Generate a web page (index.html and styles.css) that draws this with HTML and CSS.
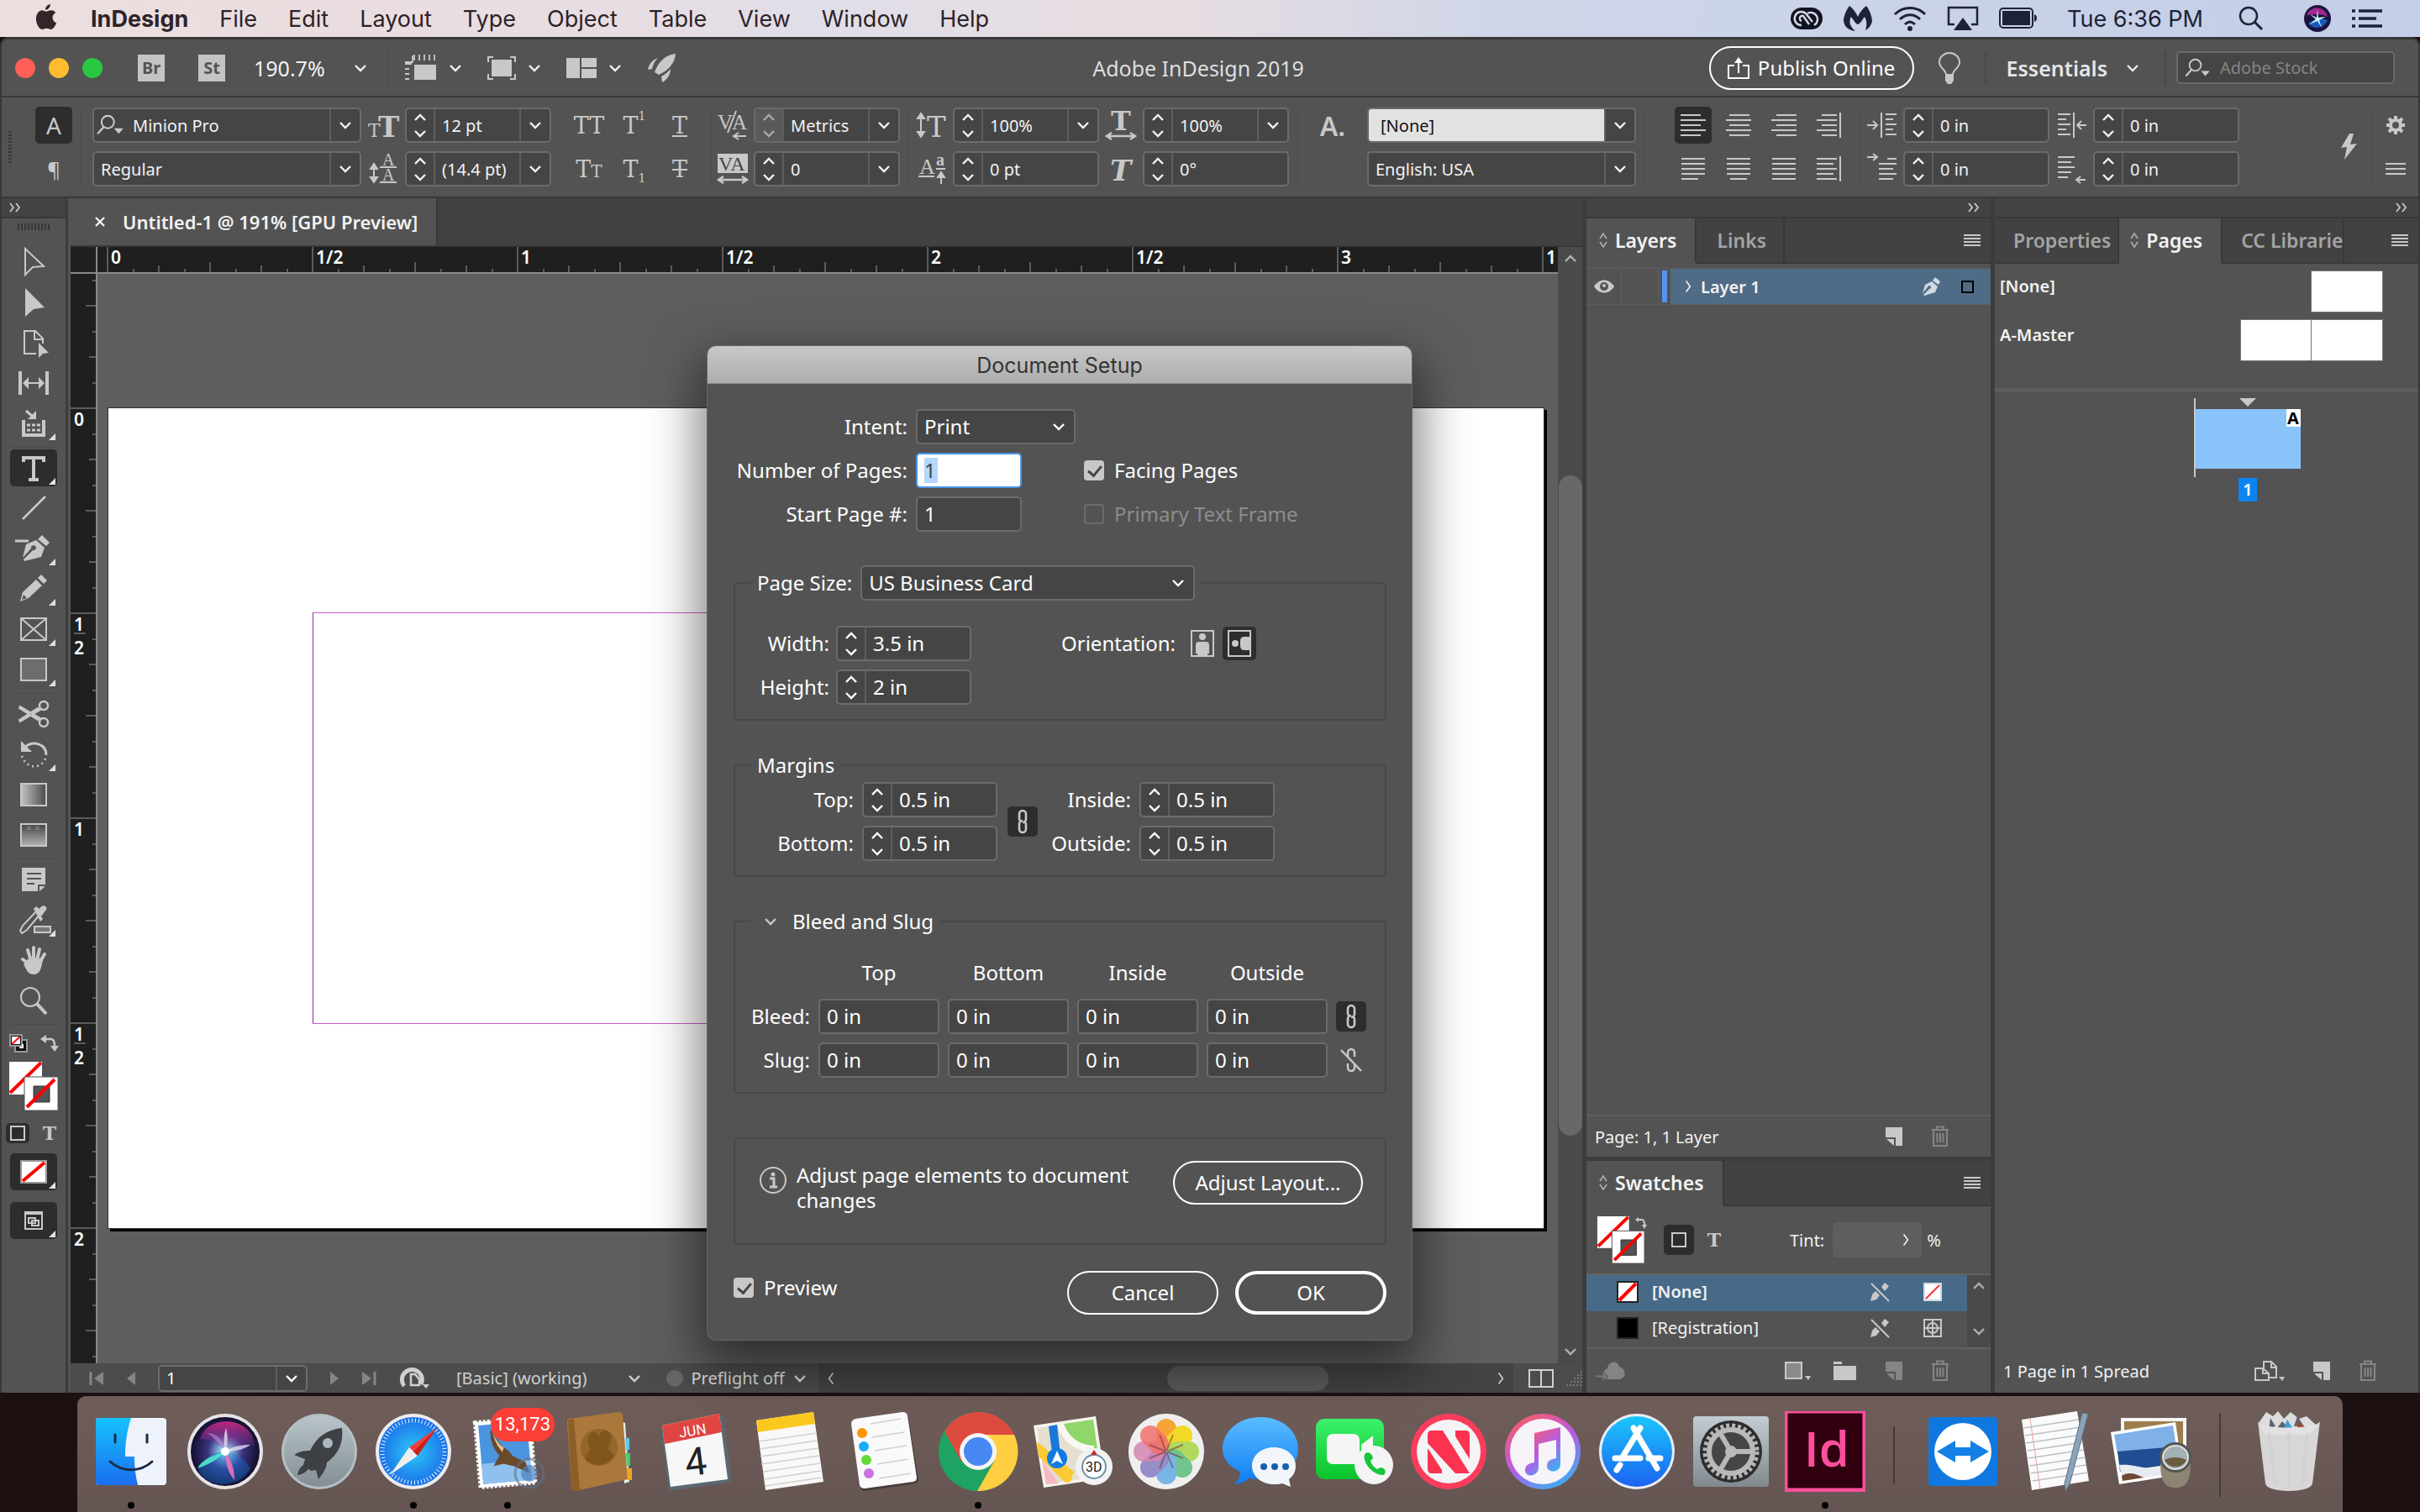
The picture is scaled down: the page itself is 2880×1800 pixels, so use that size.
FILE: index.html
```html
<!DOCTYPE html>
<html lang="en">

<head>
    <meta charset="UTF-8">
    <meta name="viewport" content="width=device-width, initial-scale=1.0">
    <title>Adobe InDesign 2019</title>
    <link rel="stylesheet" href="styles.css">
</head>

<body>
    <!-- shared icons -->
    <svg class="sprite" aria-hidden="true">
        <symbol id="down" viewBox="0 0 16 10"><path d="M2 2l6 6 6-6" fill="none" stroke="currentColor" stroke-width="2.4" /></symbol>
        <symbol id="up" viewBox="0 0 16 10"><path d="M2 8l6-6 6 6" fill="none" stroke="currentColor" stroke-width="2.4" /></symbol>
        <symbol id="right" viewBox="0 0 10 20"><path d="M2 2l6 8-6 8" fill="none" stroke="currentColor" stroke-width="2" /></symbol>
        <symbol id="left" viewBox="0 0 10 20"><path d="M8 2l-6 8 6 8" fill="none" stroke="currentColor" stroke-width="2" /></symbol>
        <symbol id="expand" viewBox="0 0 16 12"><path d="M2 1l4 5-4 5M9 1l4 5-4 5" fill="none" stroke="currentColor" stroke-width="1.8" /></symbol>
        <symbol id="updown" viewBox="0 0 12 20"><path d="M2 8l4-6 4 6M2 12l4 6 4-6" fill="none" stroke="currentColor" stroke-width="1.8" /></symbol>
        <symbol id="menu" viewBox="0 0 20 16"><path d="M0 2h20M0 6h20M0 10h20M0 14h20" stroke="currentColor" stroke-width="2" /></symbol>
        <symbol id="glass" viewBox="0 0 36 28"><circle cx="14" cy="10" r="8" fill="none" stroke="currentColor" stroke-width="2.2" /><path d="M9 16l-8 9" stroke="currentColor" stroke-width="2.6" /><path d="M22 18h12l-6 7z" fill="currentColor" /></symbol>
        <symbol id="page" viewBox="0 0 20 22"><path d="M0 0h20v22H12V12H0z" fill="currentColor" /><path d="M1 14h9v8z" fill="currentColor" /></symbol>
        <symbol id="trash" viewBox="0 0 22 26"><path d="M1 5h20M7 5V1.500h8V5M3 5v19h16V5M7.500 9v11M11 9v11M14.500 9v11" fill="none" stroke="currentColor" stroke-width="2" /></symbol>
        <symbol id="link" viewBox="0 0 16 30"><path d="M5 14a4 4 0 0 1-1-3V6a4 4 0 0 1 8 0v6a4 4 0 0 1-4 4M11 16a4 4 0 0 1 1 3v5a4 4 0 0 1-8 0v-6a4 4 0 0 1 4-4" fill="none" stroke="currentColor" stroke-width="2.6" /></symbol>
        <symbol id="unlink" viewBox="0 0 28 30"><path d="M10 11V6a4 4 0 0 1 8 0v5M18 19v5a4 4 0 0 1-8 0v-5M2 3l24 25" fill="none" stroke="currentColor" stroke-width="2.4" /></symbol>
        <symbol id="noedit" viewBox="0 0 24 24"><path d="M2 2l21 21" stroke="currentColor" stroke-width="2" /><path d="M14 6l4-5 5 4-5 6zM1 23l2-8 4-4 5 5-4 5z" fill="currentColor" /></symbol>
        <symbol id="corner" viewBox="0 0 8 8"><path d="M8 0v8H0z" fill="#e0e0e0" /></symbol>
        <symbol id="fillstroke" viewBox="0 0 60 60">
            <path d="M1 1h39v39H1z" fill="#fff" /><path d="M2 38L39 2" stroke="#f00" stroke-width="4" />
            <path d="M19 19h40v40H19z" fill="#fff" stroke="#535353" /><path d="M30 30h19v19H30z" fill="#535353" stroke="#333" />
            <path d="M22 55l33-33" stroke="#f00" stroke-width="4" />
        </symbol>
    </svg>

    <header class="menubar">
        <svg class="apple" viewBox="0 0 26 32"><path d="M18 0c.400 3-2.500 7-6 7-.500-3 2.500-6.500 6-7zM13 9c1.500 0 3.500-1.800 6.500-1.500 2 .200 3.800 1 5 2.800-5.500 3.500-4.500 10.500 1 12.700-1.500 4-4 8-6.800 8-2 0-2.800-1.200-5.200-1.200S10 31 8.300 31C4.500 31 .500 24 .500 18S4 7.800 8 7.500c2 0 3.500 1.500 5 1.500z" fill="#33262a" /></svg>
        <nav class="menus">
            <a href="#" class="app-name">InDesign</a>
            <a href="#">File</a>
            <a href="#">Edit</a>
            <a href="#">Layout</a>
            <a href="#">Type</a>
            <a href="#">Object</a>
            <a href="#">Table</a>
            <a href="#">View</a>
            <a href="#">Window</a>
            <a href="#">Help</a>
        </nav>
        <div class="tray">
            <svg width="38" height="28" viewBox="0 0 38 28"><path d="M13 1h12a13 13 0 0 1 0 26H13A13 13 0 0 1 13 1z" fill="#111420" /><path d="M13 22a8 8 0 1 1 5-14l8 10M13 17a3 3 0 1 1 2-6l7 10M20 8a8 8 0 1 1 8 14" fill="none" stroke="#d3d9ea" stroke-width="2.400" /></svg>
            <svg width="36" height="32" viewBox="0 0 36 32"><path d="M8 1c4 3 8 8 10 13C20 9 24 4 28 1c5 6 7 15 7 18-1 5-4 9-8 11 2-6 2-11-1-16-3 4-5 8-8 9-3-1-5-5-8-9-3 5-2 11 5 17C6 30 2 25 1 19 1 14 4 6 8 1z" fill="#1d2336" /></svg>
            <svg width="40" height="30" viewBox="0 0 40 30"><g fill="none" stroke="#1d2336" stroke-width="3"><path d="M2 10c10-10 26-10 36 0" /><path d="M8 16c7-7 17-7 24 0" /><path d="M14 22c4-4 8-4 12 0" /></g><circle cx="20" cy="27" r="3" fill="#1d2336" /></svg>
            <svg width="38" height="30" viewBox="0 0 38 30"><path d="M9 22H2V2h34v20h-7" fill="none" stroke="#1d2336" stroke-width="2.500" /><path d="M19 14l11 15H8z" fill="#1d2336" /></svg>
            <svg width="46" height="26" viewBox="0 0 46 26"><rect x="1" y="1" width="39" height="23" rx="4" fill="none" stroke="#1d2336" stroke-width="2" /><rect x="4" y="4" width="33" height="17" fill="#1d2336" /><path d="M42 8c4 1 4 8 0 9z" fill="#1d2336" /></svg>
            <span class="clock">Tue 6:36 PM</span>
            <svg width="30" height="30" viewBox="0 0 30 30"><circle cx="12" cy="12" r="10" fill="none" stroke="#1d2336" stroke-width="2.500" /><path d="M19 19l9 9" stroke="#1d2336" stroke-width="3" /></svg>
            <svg class="tray-siri" width="32" height="32" viewBox="0 0 32 32"><circle cx="16" cy="16" r="16" fill="#1c1440" /><path d="M3 12C8-1 26 2 28 14c-8-4-16-3-25-2z" fill="#a02890" /><path d="M5 22c8-6 15-7 23-4-4 10-16 12-23 4z" fill="#1a5ab8" /><path d="M16 5l1 10 9-1-8 4 3 9-5-8-10 4 8-6-7-6 8 4z" fill="#c6f2fa" /></svg>
            <svg width="38" height="24" viewBox="0 0 38 24"><path d="M9 3h28M9 12h21M9 21h28" stroke="#1d2336" stroke-width="3.500" /><path d="M1 3h4M1 12h4M1 21h4" stroke="#1d2336" stroke-width="3.500" /></svg>
        </div>
    </header>

    <div class="window">
        <!-- application bar -->
        <div class="appbar">
            <div class="lights">
                <button class="light red" aria-label="Close"></button>
                <button class="light yellow" aria-label="Minimize"></button>
                <button class="light green" aria-label="Zoom"></button>
            </div>
            <button class="adobe-box">Br</button>
            <button class="adobe-box">St</button>
            <button class="zoom-level">190.7% <svg class="chev"><use href="#down" /></svg></button>
            <div class="view-buttons">
                <button aria-label="View options"><svg width="38" height="32" viewBox="0 0 38 32"><path d="M11 12h26v18H11z" fill="currentColor" /><path d="M11 0v7M17 0v7M23 0v7M29 0v7M35 0v7M0 11h8M0 17h5M0 23h5M0 29h5M9 1v8H0" stroke="currentColor" stroke-width="1.800" fill="none" /></svg><svg class="chev"><use href="#down" /></svg></button>
                <button aria-label="Screen mode"><svg width="34" height="28" viewBox="0 0 34 28"><path d="M5 4h24v20H5z" fill="currentColor" /><path d="M1 7V1h6M27 1h6v6M33 21v6h-6M7 27H1v-6" stroke="currentColor" stroke-width="2" fill="none" /></svg><svg class="chev"><use href="#down" /></svg></button>
                <button aria-label="Arrange documents"><svg width="36" height="24" viewBox="0 0 36 24"><path d="M0 0h16v24H0zM18 0h18v11H18zM18 13h18v11H18z" fill="currentColor" /></svg><svg class="chev"><use href="#down" /></svg></button>
                <button aria-label="GPU performance"><svg width="36" height="34" viewBox="0 0 36 34"><path d="M34 0C22 1 13 10 9 22l5 3C25 20 33 12 34 0zM13 5C6 7 2 13 1 19l5-1c1-5 3-9 7-13zM28 18c-3 4-7 7-11 9l1 7c6-3 10-9 10-16z" fill="currentColor" /></svg></button>
            </div>
            <h1 class="app-title">Adobe InDesign 2019</h1>
            <div class="app-right">
                <button class="pill publish"><svg width="26" height="26" viewBox="0 0 26 26"><path d="M8 10H1v15h24V10h-7M13 19V3" fill="none" stroke="currentColor" stroke-width="2" /><path d="M13 0l5 7H8z" fill="currentColor" /></svg>Publish Online</button>
                <button class="bulb" aria-label="Learn"><svg width="28" height="38" viewBox="0 0 28 38"><path d="M10 27c0-6-8-8-8-15a12 11 0 0 1 24 0c0 7-8 9-8 15z" fill="none" stroke="currentColor" stroke-width="2" /><path d="M9 27h10v7l-3 4h-4l-3-4z" fill="currentColor" /></svg></button>
                <button class="workspace">Essentials <svg class="chev"><use href="#down" /></svg></button>
                <label class="stock"><svg width="36" height="24"><use href="#glass" /></svg><input type="text" placeholder="Adobe Stock" aria-label="Adobe Stock"></label>
            </div>
        </div>

        <!-- character control panel -->
        <div class="control">
            <span class="grip-v"></span>
            <div class="group">
                <button class="icon-btn on char">A</button>
                <button class="icon-btn">¶</button>
            </div>
            <div class="group g-font">
                <div class="field"><svg class="field-icon" width="36" height="26"><use href="#glass" /></svg><input type="text" value="Minion Pro" aria-label="Font family"><button class="drop" aria-label="Fonts"><svg class="chev"><use href="#down" /></svg></button></div>
                <div class="field pick"><select aria-label="Font style"><option>Regular</option></select><span class="drop"><svg class="chev"><use href="#down" /></svg></span></div>
                <svg class="ico" viewBox="0 0 44 36"><text x="4" y="32" class="slab" font-size="22">T</text><text x="16" y="32" class="slab b" font-size="34">T</text></svg>
                <svg class="ico" viewBox="0 0 44 36"><path d="M11 14v18M7 18l4-6 4 6zM7 28l4 6 4-6zM18 16h20M18 34h20" stroke="currentColor" stroke-width="2" fill="currentColor" /><text x="21" y="14" class="serif" font-size="20">A</text><text x="21" y="32" class="serif" font-size="20">A</text></svg>
                <div class="field"><span class="spin"><button><svg><use href="#up" /></svg></button><button><svg><use href="#down" /></svg></button></span><input type="text" value="12 pt" aria-label="Font size"><button class="drop" aria-label="Sizes"><svg class="chev"><use href="#down" /></svg></button></div>
                <div class="field"><span class="spin"><button><svg><use href="#up" /></svg></button><button><svg><use href="#down" /></svg></button></span><input type="text" value="(14.4 pt)" aria-label="Leading"><button class="drop" aria-label="Leadings"><svg class="chev"><use href="#down" /></svg></button></div>
            </div>
            <div class="group g-case">
                <button class="ty">TT</button>
                <button class="ty">T<small>T</small></button>
                <button class="ty">T<sup>1</sup></button>
                <button class="ty">T<sub>1</sub></button>
                <button class="ty"><u>T</u></button>
                <button class="ty"><s>T</s></button>
            </div>
            <div class="group g-kern">
                <svg class="ico" viewBox="0 0 44 36"><text x="4" y="23" class="serif" font-size="25">V</text><text x="21" y="23" class="serif" font-size="25">A</text><path d="M16 27L26 1M24 31h14M29 27l-6 4 6 4" stroke="currentColor" stroke-width="2" fill="none" /></svg>
                <svg class="ico" viewBox="0 0 44 36"><path d="M4 0h36v23H4z" fill="currentColor" /><text x="5" y="20" class="serif dark" font-size="24">VA</text><path d="M6 31h32M11 27l-6 4 6 4M33 27l6 4-6 4" stroke="currentColor" stroke-width="2.500" fill="none" /></svg>
                <div class="field"><span class="spin dim"><button><svg><use href="#up" /></svg></button><button><svg><use href="#down" /></svg></button></span><input type="text" value="Metrics" aria-label="Kerning"><button class="drop" aria-label="Kerning values"><svg class="chev"><use href="#down" /></svg></button></div>
                <div class="field"><span class="spin"><button><svg><use href="#up" /></svg></button><button><svg><use href="#down" /></svg></button></span><input type="text" value="0" aria-label="Tracking"><button class="drop" aria-label="Tracking values"><svg class="chev"><use href="#down" /></svg></button></div>
            </div>
            <div class="group g-scale">
                <svg class="ico" viewBox="0 0 44 36"><path d="M10 6v24M6 10l4-6 4 6zM6 26l4 6 4-6z" stroke="currentColor" stroke-width="2" fill="currentColor" /><text x="17" y="32" class="slab" font-size="34">T</text></svg>
                <svg class="ico" viewBox="0 0 44 36"><text x="8" y="24" class="serif" font-size="26">A</text><text x="28" y="14" class="serif b" font-size="20">a</text><path d="M7 27h19M28 18h11M34 36V24M30 28l4-6 4 6z" stroke="currentColor" stroke-width="2" fill="currentColor" /></svg>
                <div class="field"><span class="spin"><button><svg><use href="#up" /></svg></button><button><svg><use href="#down" /></svg></button></span><input type="text" value="100%" aria-label="Vertical scale"><button class="drop" aria-label="Vertical scales"><svg class="chev"><use href="#down" /></svg></button></div>
                <div class="field"><span class="spin"><button><svg><use href="#up" /></svg></button><button><svg><use href="#down" /></svg></button></span><input type="text" value="0 pt" aria-label="Baseline shift"></div>
                <svg class="ico" viewBox="0 0 44 36"><text x="10" y="24" class="slab b" font-size="32">T</text><path d="M6 31h32M11 27l-6 4 6 4M33 27l6 4-6 4" stroke="currentColor" stroke-width="2.500" fill="none" /></svg>
                <svg class="ico" viewBox="0 0 44 36"><text x="9" y="32" class="slab b i" font-size="34">T</text></svg>
                <div class="field"><span class="spin"><button><svg><use href="#up" /></svg></button><button><svg><use href="#down" /></svg></button></span><input type="text" value="100%" aria-label="Horizontal scale"><button class="drop" aria-label="Horizontal scales"><svg class="chev"><use href="#down" /></svg></button></div>
                <div class="field"><span class="spin"><button><svg><use href="#up" /></svg></button><button><svg><use href="#down" /></svg></button></span><input type="text" value="0°" aria-label="Skew"></div>
            </div>
            <div class="group g-style">
                <span class="char-style">A.</span>
                <span></span>
                <div class="field pick light-field"><select aria-label="Character style"><option>[None]</option></select><span class="drop"><svg class="chev"><use href="#down" /></svg></span></div>
                <div class="field pick"><select aria-label="Language"><option>English: USA</option></select><span class="drop"><svg class="chev"><use href="#down" /></svg></span></div>
            </div>
            <div class="group g-align">
                <button class="icon-btn on" aria-label="Align left"><svg viewBox="0 0 30 30"><path d="M0 3h24M0 9h30M0 15h24M0 21h30M0 27h24" /></svg></button>
                <button class="icon-btn" aria-label="Justify last left"><svg viewBox="0 0 30 30"><path d="M1 3h28M1 9h28M1 15h28M1 21h28M1 27h20" /></svg></button>
                <button class="icon-btn" aria-label="Align center"><svg viewBox="0 0 30 30"><path d="M4 3h24M0 9h32M4 15h24M0 21h32M4 27h24" /></svg></button>
                <button class="icon-btn" aria-label="Justify last center"><svg viewBox="0 0 30 30"><path d="M1 3h28M1 9h28M1 15h28M1 21h28M5 27h20" /></svg></button>
                <button class="icon-btn" aria-label="Align right"><svg viewBox="0 0 30 30"><path d="M6 3h24M0 9h30M6 15h24M0 21h30M6 27h24" /></svg></button>
                <button class="icon-btn" aria-label="Justify all"><svg viewBox="0 0 30 30"><path d="M1 3h28M1 9h28M1 15h28M1 21h28M1 27h28" /></svg></button>
                <button class="icon-btn" aria-label="Align towards spine"><svg viewBox="0 0 30 30"><path d="M6 3h18M0 9h24M6 15h18M0 21h24M6 27h18M28 0v30" /></svg></button>
                <button class="icon-btn" aria-label="Align away from spine"><svg viewBox="0 0 30 30"><path d="M0 3h24M0 9h20M0 15h24M0 21h20M0 27h24M28 0v30" /></svg></button>
            </div>
            <div class="group g-indent">
                <svg class="ico line" viewBox="0 0 44 36"><path d="M4 18h11M11 13l5 5-5 5M21 3v30M26 5h13M26 11h9M26 17h13M26 23h9M26 29h13" /></svg>
                <svg class="ico line" viewBox="0 0 44 36"><path d="M4 4h11M11 0l5 4-5 4M28 6h11M18 12h21M18 18h17M18 24h21M18 30h17" /></svg>
                <div class="field"><span class="spin"><button><svg><use href="#up" /></svg></button><button><svg><use href="#down" /></svg></button></span><input type="text" value="0 in" aria-label="Left indent"></div>
                <div class="field"><span class="spin"><button><svg><use href="#up" /></svg></button><button><svg><use href="#down" /></svg></button></span><input type="text" value="0 in" aria-label="First line indent"></div>
                <svg class="ico line" viewBox="0 0 44 36"><path d="M6 5h15M6 11h10M6 17h15M6 23h10M6 29h15M25 3v30M29 18h11M34 13l-5 5 5 5" /></svg>
                <svg class="ico line" viewBox="0 0 44 36"><path d="M6 4h20M6 10h16M6 16h20M6 22h16M6 28h12M28 31h11M33 27l-5 4 5 4" /></svg>
                <div class="field"><span class="spin"><button><svg><use href="#up" /></svg></button><button><svg><use href="#down" /></svg></button></span><input type="text" value="0 in" aria-label="Right indent"></div>
                <div class="field"><span class="spin"><button><svg><use href="#up" /></svg></button><button><svg><use href="#down" /></svg></button></span><input type="text" value="0 in" aria-label="Last line indent"></div>
            </div>
            <div class="control-end">
                <button aria-label="Quick apply"><svg width="22" height="32" viewBox="0 0 22 32"><path d="M12 0L2 17l7-1-3 15L21 12l-8 1 4-13z" fill="currentColor" /></svg></button>
                <div class="group g-end">
                    <button aria-label="Settings"><svg width="22" height="22" viewBox="0 0 22 22"><circle cx="11" cy="11" r="6" fill="none" stroke="currentColor" stroke-width="4" /><path d="M11 0v4M11 18v4M0 11h4M18 11h4M3 3l3 3M16 16l3 3M3 19l3-3M16 6l3-3" stroke="currentColor" stroke-width="4" /></svg></button>
                    <button aria-label="Panel menu"><svg width="24" height="16" viewBox="0 0 24 16"><path d="M0 2h24M0 8h24M0 14h24" stroke="currentColor" stroke-width="2" /></svg></button>
                </div>
            </div>
        </div>

        <div class="workarea">
            <!-- tools -->
            <aside class="tools">
                <div class="dock-strip left"><svg width="16" height="12"><use href="#expand" /></svg></div>
                <span class="grip-h"></span>
                <div class="tool-set">
                    <button aria-label="Selection"><svg viewBox="0 0 48 40"><path d="M14 4v31l9-9 13-1z" fill="none" stroke="currentColor" stroke-width="2" /></svg></button>
                    <button aria-label="Direct selection"><svg viewBox="0 0 48 40"><path d="M14 3v34l10-9 13-2z" fill="currentColor" /></svg></button>
                    <button aria-label="Page"><svg viewBox="0 0 48 40"><path d="M27 33H13V6h13l9 9v6M25 6v10h10" fill="none" stroke="currentColor" stroke-width="2" /><path d="M30 20v18l5-5 7-1z" fill="currentColor" /></svg></button>
                    <button aria-label="Gap"><svg viewBox="0 0 48 40"><path d="M8 6v28M40 6v28" stroke="currentColor" stroke-width="4" /><path d="M14 20h20" stroke="currentColor" stroke-width="2" /><path d="M11 20l7-7v14zM37 20l-7-7v14z" fill="currentColor" /></svg></button>
                    <button aria-label="Content collector"><svg viewBox="0 0 48 40"><path d="M12 16v18h24V16" fill="none" stroke="currentColor" stroke-width="4" /><path d="M16 22h16M16 28h16" stroke="currentColor" stroke-width="3" stroke-dasharray="4 2" /><path d="M15 5l8 7" stroke="currentColor" stroke-width="3" /><path d="M27 5v10H17z" fill="currentColor" /></svg><svg class="more"><use href="#corner" /></svg></button>
                </div>
                <div class="tool-set">
                    <button class="on" aria-label="Type"><svg viewBox="0 0 48 40"><path d="M12 13V8h24v5M24 8v26M18 34h12" fill="none" stroke="currentColor" stroke-width="4" /></svg><svg class="more"><use href="#corner" /></svg></button>
                    <button aria-label="Line"><svg viewBox="0 0 48 40"><path d="M11 33L38 6" stroke="currentColor" stroke-width="2.500" /></svg></button>
                    <button aria-label="Pen"><svg viewBox="0 0 48 40"><path d="M2 11h16" stroke="currentColor" stroke-width="3" /><path d="M34 4l9 9-4 4-10-8zM27 10l10 9-4 11-20 5-1-2 11-11a3 3 0 1 0-2-2L11 31l4-16z" fill="currentColor" /></svg><svg class="more"><use href="#corner" /></svg></button>
                    <button aria-label="Pencil"><svg viewBox="0 0 48 40"><path d="M33 3l7 7-4 4-7-7zM27 9l7 7-16 15-10 4 3-11zM12 27l-2 6 6-2z" fill="currentColor" fill-rule="evenodd" /></svg><svg class="more"><use href="#corner" /></svg></button>
                    <button aria-label="Rectangle frame"><svg viewBox="0 0 48 40"><path d="M9 7h30v26H9zM9 7l30 26M39 7L9 33" fill="none" stroke="currentColor" stroke-width="2" /></svg><svg class="more"><use href="#corner" /></svg></button>
                    <button aria-label="Rectangle"><svg viewBox="0 0 48 40"><path d="M9 7h30v26H9z" fill="#6d6d6d" stroke="currentColor" stroke-width="2" /></svg><svg class="more"><use href="#corner" /></svg></button>
                </div>
                <div class="tool-set">
                    <button aria-label="Scissors"><svg viewBox="0 0 48 40"><path d="M8 11l24 14-3 2L7 13zM8 29l24-14-3-2L7 27z" fill="currentColor" stroke="currentColor" stroke-width="2" /><g fill="none" stroke="currentColor" stroke-width="2.500"><circle cx="36" cy="10" r="5" /><circle cx="36" cy="30" r="5" /></g></svg></button>
                    <button aria-label="Rotate"><svg viewBox="0 0 48 40"><path d="M13 12c10-9 26-5 26 9" fill="none" stroke="currentColor" stroke-width="3" /><path d="M9 4v13h13z" fill="currentColor" /><path d="M38 25c-4 12-22 14-28-3" fill="none" stroke="currentColor" stroke-width="2.500" stroke-dasharray="2 4" /></svg><svg class="more"><use href="#corner" /></svg></button>
                    <button aria-label="Gradient swatch"><svg viewBox="0 0 48 40"><linearGradient id="gs"><stop stop-color="#c4c4c4" /><stop offset="1" stop-color="#4a4a4a" /></linearGradient><path d="M9 7h30v26H9z" fill="url(#gs)" stroke="currentColor" stroke-width="2" /></svg></button>
                    <button aria-label="Gradient feather"><svg viewBox="0 0 48 40"><linearGradient id="gf" x2="0" y2="1"><stop stop-color="#444" /><stop offset="1" stop-color="#b4b4b4" /></linearGradient><path d="M9 7h30v26H9z" fill="url(#gf)" stroke="currentColor" stroke-width="2" /><path d="M16 9h5v5h-5zM26 9h5v5h-5z" fill="#8a8a8a" opacity=".5" /></svg></button>
                </div>
                <div class="tool-set">
                    <button aria-label="Note"><svg viewBox="0 0 48 40"><path d="M10 6h28v20h-9v8H10z" fill="currentColor" /><path d="M31 28h7l-7 6z" fill="currentColor" /><path d="M16 13h17M16 19h17M16 25h9" stroke="#535353" stroke-width="2" /></svg></button>
                    <button aria-label="Color theme"><svg viewBox="0 0 48 40"><path d="M28 9l4 4-16 19-6 4-2-3 3-6z" fill="none" stroke="currentColor" stroke-width="2" /><path d="M24 7l3-3 4 3c4-7 10-3 8 1l-6 8 2 3-3 3z" fill="currentColor" /><path d="M25 28h19v7H25z" fill="#777" stroke="currentColor" stroke-width="2" /></svg><svg class="more"><use href="#corner" /></svg></button>
                    <button aria-label="Hand"><svg viewBox="0 0 48 40"><g stroke="currentColor" stroke-width="4" stroke-linecap="round"><path d="M11 19l9 7M17 8l4 13M24 5v15M31 7l-3 13M37 13l-6 10" /></g><path d="M18 18h13l4 2c-2 9-3 17-11 17-7 0-8-5-12-12z" fill="currentColor" /></svg></button>
                    <button aria-label="Zoom"><svg viewBox="0 0 48 40"><circle cx="20" cy="16" r="11" fill="none" stroke="currentColor" stroke-width="2" /><path d="M28 24l11 12" stroke="currentColor" stroke-width="4" /></svg></button>
                </div>
                <div class="swatch-tools">
                    <button aria-label="Default fill and stroke"><svg width="24" height="24" viewBox="0 0 24 24"><path d="M8 8h14v14H8z" fill="#111" stroke="#999" stroke-width="2" /><path d="M2 2h14v13H2z" fill="#111" stroke="#999" stroke-width="2" /><path d="M4 4h10v9H4z" fill="#fff" /><path d="M4 13L14 4" stroke="#f00" stroke-width="2" /><path d="M13 17h4v-4" stroke="#fff" stroke-width="2" fill="none" /></svg></button>
                    <button aria-label="Swap"><svg width="22" height="20" viewBox="0 0 22 20"><path d="M5 5h8q4 0 4 9" fill="none" stroke="currentColor" stroke-width="2.500" /><path d="M0 5l7-5v10zM12 13h10l-5 7z" fill="currentColor" /></svg></button>
                </div>
                <button class="fill-big" aria-label="Fill and stroke"><svg width="60" height="60"><use href="#fillstroke" /></svg></button>
                <div class="format-row">
                    <button class="on" aria-label="Formatting affects container"><svg width="18" height="18" viewBox="0 0 18 18"><path d="M1 1h16v16H1z" fill="none" stroke="currentColor" stroke-width="2" /></svg></button>
                    <button class="slab-t">T</button>
                </div>
                <button class="big-tool" aria-label="Apply none"><svg width="32" height="28" viewBox="0 0 32 28"><path d="M1 1h30v26H1z" fill="#fff" stroke="#999" stroke-width="2" /><path d="M3 25L29 3" stroke="#f00" stroke-width="4" /></svg><svg class="more"><use href="#corner" /></svg></button>
                <button class="big-tool" aria-label="Screen mode"><svg width="22" height="22" viewBox="0 0 22 22"><path d="M1 1h20v20H1zM0 3h22" fill="none" stroke="currentColor" stroke-width="2" /><path d="M5 8h8v6H5zM9 11h8v6H9z" fill="none" stroke="currentColor" stroke-width="2" /></svg><svg class="more"><use href="#corner" /></svg></button>
            </aside>

            <!-- document -->
            <main class="document">
                <div class="doc-tabs">
                    <div class="doc-tab"><button aria-label="Close tab"><svg width="14" height="14" viewBox="0 0 14 14"><path d="M2 2l10 10M12 2L2 12" stroke="currentColor" stroke-width="2.400" /></svg></button><span>Untitled-1 @ 191% [GPU Preview]</span></div>
                </div>
                <div class="doc-body">
                    <div class="ruler-corner"></div>
                    <svg class="ruler-x" id="rulerX"></svg>
                    <svg class="ruler-y" id="rulerY"></svg>
                    <div class="canvas">
                        <div class="sheet">
                            <div class="margins"></div>
                        </div>
                    </div>
                    <div class="scroll-y">
                        <button aria-label="Scroll up"><svg class="chev"><use href="#up" /></svg></button>
                        <span class="thumb"></span>
                        <button aria-label="Scroll down"><svg class="chev"><use href="#down" /></svg></button>
                    </div>
                </div>
                <div class="status">
                    <div class="pager">
                        <button class="dim" aria-label="First page"><svg width="18" height="16" viewBox="0 0 18 16"><path d="M2 0v16" stroke="currentColor" stroke-width="3" /><path d="M17 0v16L6 8z" fill="currentColor" /></svg></button>
                        <button class="dim" aria-label="Previous page"><svg width="10" height="16" viewBox="0 0 10 16"><path d="M10 0v16L0 8z" fill="currentColor" /></svg></button>
                        <div class="field page-field"><input type="text" value="1" aria-label="Page"><button class="drop" aria-label="Pages"><svg class="chev"><use href="#down" /></svg></button></div>
                        <button class="dim" aria-label="Next page"><svg width="10" height="16" viewBox="0 0 10 16"><path d="M0 0v16l10-8z" fill="currentColor" /></svg></button>
                        <button class="dim" aria-label="Last page"><svg width="18" height="16" viewBox="0 0 18 16"><path d="M16 0v16" stroke="currentColor" stroke-width="3" /><path d="M1 0v16l11-8z" fill="currentColor" /></svg></button>
                        <button aria-label="Open preflight"><svg width="36" height="26" viewBox="0 0 36 26"><path d="M6 22A12 12 0 1 1 26 20" fill="none" stroke="currentColor" stroke-width="5" /><path d="M14 8h5l5 6v7H14z" fill="none" stroke="currentColor" stroke-width="2.500" /><path d="M28 20h8l-4 5z" fill="currentColor" /></svg></button>
                    </div>
                    <button class="profile">[Basic] (working) <svg class="chev"><use href="#down" /></svg></button>
                    <button class="preflight"><i></i>Preflight off <svg class="chev"><use href="#down" /></svg></button>
                    <div class="scroll-x">
                        <button aria-label="Scroll left"><svg width="10" height="16"><use href="#left" /></svg></button>
                        <span class="thumb"></span>
                        <button aria-label="Scroll right"><svg width="10" height="16"><use href="#right" /></svg></button>
                    </div>
                    <button class="split" aria-label="Split view"><svg width="30" height="22" viewBox="0 0 30 22"><path d="M1 1h28v20H1zM15 1v20" fill="none" stroke="currentColor" stroke-width="2" /></svg></button>
                    <svg width="20" height="20" viewBox="0 0 20 20"><path d="M1 18h19M6 14h14M10 10h10M14 6h6M18 2h2" stroke="#777" stroke-width="2" stroke-dasharray="2 2" /></svg>
                </div>
            </main>

            <!-- layers and swatches -->
            <aside class="panel-col mid">
                <div class="dock-strip"><svg width="16" height="12"><use href="#expand" /></svg></div>
                <section class="panel layers">
                    <div class="tabs">
                        <button class="tab on"><svg width="12" height="20"><use href="#updown" /></svg>Layers</button>
                        <button class="tab">Links</button>
                        <button class="tab-menu" aria-label="Layers menu"><svg width="20" height="16"><use href="#menu" /></svg></button>
                    </div>
                    <div class="layer-list">
                        <div class="layer">
                            <button class="eye" aria-label="Visibility"><svg width="24" height="16" viewBox="0 0 24 16"><path d="M0 8C6-2 18-2 24 8c-6 10-18 10-24 0z" fill="currentColor" /><circle cx="12" cy="8" r="5" fill="#535353" /><circle cx="12" cy="7" r="2" fill="currentColor" /></svg></button>
                            <span class="lock"></span>
                            <span class="tag"></span>
                            <div class="layer-name"><svg width="10" height="16"><use href="#right" /></svg><span>Layer 1</span><svg class="nib" width="22" height="22" viewBox="0 0 22 22"><path d="M15 0l6 5-2 4-7-5zM11 5l7 6-3 7-13 4-1-1 7-7a2 2 0 1 0-2-2l-6 7 3-10z" fill="#cfdae4" /></svg><i></i></div>
                        </div>
                    </div>
                    <div class="panel-foot">
                        <span>Page: 1, 1 Layer</span>
                        <button aria-label="New layer"><svg width="20" height="22"><use href="#page" /></svg></button>
                        <button class="faint" aria-label="Delete layer"><svg width="22" height="26"><use href="#trash" /></svg></button>
                    </div>
                </section>
                <section class="panel swatches">
                    <div class="tabs">
                        <button class="tab on"><svg width="12" height="20"><use href="#updown" /></svg>Swatches</button>
                        <button class="tab-menu" aria-label="Swatches menu"><svg width="20" height="16"><use href="#menu" /></svg></button>
                    </div>
                    <div class="swatch-bar">
                        <svg width="58" height="58"><use href="#fillstroke" /></svg>
                        <svg class="swap" width="14" height="14" viewBox="0 0 14 14"><path d="M4 3h4q3 0 3 6" fill="none" stroke="currentColor" stroke-width="2" /><path d="M0 3l4-3v6zM8 9h6l-3 5z" fill="currentColor" /></svg>
                        <button class="on" aria-label="Container"><svg width="18" height="18" viewBox="0 0 18 18"><path d="M1 1h16v16H1z" fill="none" stroke="currentColor" stroke-width="2" /></svg></button>
                        <button class="slab-t">T</button>
                        <label for="tint">Tint:</label>
                        <div class="tint"><input type="text" id="tint" disabled><svg width="10" height="16"><use href="#right" /></svg></div>
                        <span>%</span>
                    </div>
                    <div class="swatch-list">
                        <ul>
                            <li class="on"><svg width="26" height="26" viewBox="0 0 26 26"><path d="M1 1h24v24H1z" fill="#fff" stroke="#222" stroke-width="2" /><path d="M3 23L23 3" stroke="#f00" stroke-width="4" /></svg><b>[None]</b><svg width="24" height="24"><use href="#noedit" /></svg><svg width="22" height="22" viewBox="0 0 22 22"><path d="M1 1h20v20H1z" fill="#fff" stroke="#cfdae4" stroke-width="2" /><path d="M3 19L19 3" stroke="#e33" stroke-width="2" /></svg></li>
                            <li><svg width="26" height="26" viewBox="0 0 26 26"><path d="M1 1h24v24H1z" fill="#000" stroke="#222" stroke-width="2" /></svg><span>[Registration]</span><svg width="24" height="24"><use href="#noedit" /></svg><svg width="22" height="22" viewBox="0 0 22 22"><path d="M1 1h20v20H1zM11 1v20M1 11h20" fill="none" stroke="currentColor" stroke-width="2" /><circle cx="11" cy="11" r="6" fill="none" stroke="currentColor" stroke-width="2" /></svg></li>
                        </ul>
                        <div class="mini-scroll"><svg class="chev"><use href="#up" /></svg><svg class="chev"><use href="#down" /></svg></div>
                    </div>
                    <div class="panel-foot">
                        <button class="faint" aria-label="Add to library"><svg width="36" height="22" viewBox="0 0 36 22"><path d="M15 21a7 7 0 0 1 0-13c1-9 12-10 14-2 8 2 9 13 1 15z" fill="currentColor" /><path d="M0 16h9v-5l7 7-7 6v-5H0z" fill="#777" stroke="#535353" /></svg></button>
                        <button class="push" aria-label="Swatch views"><svg width="32" height="22" viewBox="0 0 32 22"><path d="M1 1h19v19H1z" fill="#8b8b8b" stroke="currentColor" stroke-width="2" /><path d="M24 17h7l-3 5z" fill="currentColor" /></svg></button>
                        <button aria-label="New group"><svg width="28" height="22" viewBox="0 0 28 22"><path d="M0 0h10v3H0zM0 5h27v17H0z" fill="currentColor" /></svg></button>
                        <button class="faint" aria-label="New swatch"><svg width="20" height="22"><use href="#page" /></svg></button>
                        <button class="faint" aria-label="Delete swatch"><svg width="22" height="26"><use href="#trash" /></svg></button>
                    </div>
                </section>
            </aside>

            <!-- pages -->
            <aside class="panel-col end">
                <div class="dock-strip"><svg width="16" height="12"><use href="#expand" /></svg></div>
                <section class="panel pages">
                    <div class="tabs">
                        <button class="tab">Properties</button>
                        <button class="tab on"><svg width="12" height="20"><use href="#updown" /></svg>Pages</button>
                        <button class="tab clip">CC Librarie</button>
                        <button class="tab-menu" aria-label="Pages menu"><svg width="20" height="16"><use href="#menu" /></svg></button>
                    </div>
                    <div class="masters">
                        <div class="master"><span>[None]</span><i></i></div>
                        <div class="master"><span>A-Master</span><i></i><i></i></div>
                    </div>
                    <div class="page-list">
                        <div class="spread">
                            <svg width="20" height="10" viewBox="0 0 20 10"><path d="M0 0h20L10 10z" fill="#c8c8c8" /></svg>
                            <div class="page-thumb"><b>A</b></div>
                            <span class="page-num">1</span>
                        </div>
                    </div>
                    <div class="panel-foot">
                        <span>1 Page in 1 Spread</span>
                        <button aria-label="Edit page size"><svg width="36" height="24" viewBox="0 0 36 24"><path d="M11 9V1h9l6 6v13h-8M20 1v7h6M1 9h9l7 6v8H1zM10 9v6h7" fill="none" stroke="currentColor" stroke-width="2" /><path d="M29 19h7l-3 5z" fill="currentColor" /></svg></button>
                        <button aria-label="New page"><svg width="20" height="22"><use href="#page" /></svg></button>
                        <button class="faint" aria-label="Delete page"><svg width="22" height="26"><use href="#trash" /></svg></button>
                    </div>
                </section>
            </aside>
        </div>
    </div>

    <!-- document setup dialog -->
    <form class="dialog">
        <h2>Document Setup</h2>
        <div class="dialog-body">
            <div class="top-grid">
                <label for="intent">Intent:</label>
                <div class="field pick plain"><select id="intent"><option>Print</option></select><span class="drop"><svg class="chev"><use href="#down" /></svg></span></div>
                <span></span>
                <label for="numPages">Number of Pages:</label>
                <div class="field short focus"><input type="text" id="numPages" value="1"></div>
                <label class="check"><input type="checkbox" checked>Facing Pages</label>
                <label for="startPage">Start Page #:</label>
                <div class="field short"><input type="text" id="startPage" value="1"></div>
                <label class="check off"><input type="checkbox" disabled>Primary Text Frame</label>
            </div>

            <fieldset class="size-set">
                <legend><label for="pageSize">Page Size:</label>
                    <div class="field pick plain"><select id="pageSize"><option>US Business Card</option></select><span class="drop"><svg class="chev"><use href="#down" /></svg></span></div>
                </legend>
                <div class="pair size-pair">
                    <label for="width">Width:</label>
                    <div class="field step"><span class="spin"><button type="button"><svg><use href="#up" /></svg></button><button type="button"><svg><use href="#down" /></svg></button></span><input type="text" id="width" value="3.5 in"></div>
                    <label for="height">Height:</label>
                    <div class="field step"><span class="spin"><button type="button"><svg><use href="#up" /></svg></button><button type="button"><svg><use href="#down" /></svg></button></span><input type="text" id="height" value="2 in"></div>
                </div>
                <div class="orient">
                    <span>Orientation:</span>
                    <button type="button" aria-label="Portrait"><svg width="28" height="32" viewBox="0 0 28 32"><path d="M1 1h26v30H1z" fill="none" stroke="currentColor" stroke-width="2" /><circle cx="14" cy="8" r="4" fill="currentColor" /><path d="M6 28V18q0-4 4-4h8q4 0 4 4v10h-2v3H8v-3z" fill="currentColor" /></svg></button>
                    <button type="button" class="on" aria-label="Landscape"><svg width="28" height="32" viewBox="0 0 28 32"><path d="M1 1h26v30H1z" fill="none" stroke="currentColor" stroke-width="2" /><circle cx="9" cy="16" r="4" fill="currentColor" /><path d="M27 8h-7q-5 0-5 5v6q0 5 5 5h7z" fill="currentColor" /></svg></button>
                </div>
            </fieldset>

            <fieldset class="margin-set">
                <legend>Margins</legend>
                <div class="pair margin-pair">
                    <label for="mTop">Top:</label>
                    <div class="field step"><span class="spin"><button type="button"><svg><use href="#up" /></svg></button><button type="button"><svg><use href="#down" /></svg></button></span><input type="text" id="mTop" value="0.5 in"></div>
                    <label for="mBottom">Bottom:</label>
                    <div class="field step"><span class="spin"><button type="button"><svg><use href="#up" /></svg></button><button type="button"><svg><use href="#down" /></svg></button></span><input type="text" id="mBottom" value="0.5 in"></div>
                </div>
                <button type="button" class="link on" aria-label="Link margins"><svg width="16" height="30"><use href="#link" /></svg></button>
                <div class="pair margin-pair2">
                    <label for="mInside">Inside:</label>
                    <div class="field step"><span class="spin"><button type="button"><svg><use href="#up" /></svg></button><button type="button"><svg><use href="#down" /></svg></button></span><input type="text" id="mInside" value="0.5 in"></div>
                    <label for="mOutside">Outside:</label>
                    <div class="field step"><span class="spin"><button type="button"><svg><use href="#up" /></svg></button><button type="button"><svg><use href="#down" /></svg></button></span><input type="text" id="mOutside" value="0.5 in"></div>
                </div>
            </fieldset>

            <fieldset class="bleed-set">
                <legend><svg class="chev"><use href="#down" /></svg>Bleed and Slug</legend>
                <table>
                    <tr>
                        <th></th>
                        <th>Top</th>
                        <th>Bottom</th>
                        <th>Inside</th>
                        <th>Outside</th>
                        <th></th>
                    </tr>
                    <tr>
                        <th>Bleed:</th>
                        <td><div class="field"><input type="text" value="0 in" aria-label="Bleed top"></div></td>
                        <td><div class="field"><input type="text" value="0 in" aria-label="Bleed bottom"></div></td>
                        <td><div class="field"><input type="text" value="0 in" aria-label="Bleed inside"></div></td>
                        <td><div class="field"><input type="text" value="0 in" aria-label="Bleed outside"></div></td>
                        <td><button type="button" class="link on" aria-label="Link bleed"><svg width="16" height="30"><use href="#link" /></svg></button></td>
                    </tr>
                    <tr>
                        <th>Slug:</th>
                        <td><div class="field"><input type="text" value="0 in" aria-label="Slug top"></div></td>
                        <td><div class="field"><input type="text" value="0 in" aria-label="Slug bottom"></div></td>
                        <td><div class="field"><input type="text" value="0 in" aria-label="Slug inside"></div></td>
                        <td><div class="field"><input type="text" value="0 in" aria-label="Slug outside"></div></td>
                        <td><button type="button" class="link" aria-label="Link slug"><svg width="28" height="30"><use href="#unlink" /></svg></button></td>
                    </tr>
                </table>
            </fieldset>

            <div class="adjust">
                <svg width="32" height="32" viewBox="0 0 32 32"><circle cx="16" cy="16" r="15" fill="none" stroke="#c8c8c8" stroke-width="2" /><circle cx="16" cy="9" r="2.500" fill="#c8c8c8" /><path d="M12 14h5v9M12 24h9" fill="none" stroke="#c8c8c8" stroke-width="3" /></svg>
                <p>Adjust page elements to document changes</p>
                <button type="button" class="pill">Adjust Layout...</button>
            </div>

            <div class="dialog-foot">
                <label class="check"><input type="checkbox" checked>Preview</label>
                <button type="button" class="pill">Cancel</button>
                <button type="button" class="pill ok">OK</button>
            </div>
        </div>
    </form>

    <!-- dock -->
    <footer class="dock">
        <div class="dock-item running"><svg viewBox="0 0 96 96"><linearGradient id="fb" x2="0" y2="1"><stop stop-color="#16c3fb" /><stop offset="1" stop-color="#1a6ef0" /></linearGradient><rect x="6" y="8" width="84" height="80" rx="4" fill="#eef2fa" /><path d="M10 8h38c-5 16-7 30-7 46h11c0 12 1 22 4 34H10q-4 0-4-4V12q0-4 4-4z" fill="url(#fb)" /><path d="M29 28v9M67 28v9" stroke="#1c2b44" stroke-width="3" stroke-linecap="round" /><path d="M23 60c14 13 36 13 50 0" fill="none" stroke="#1c2b44" stroke-width="3" stroke-linecap="round" /></svg></div>
        <div class="dock-item"><svg viewBox="0 0 96 96"><radialGradient id="sr"><stop stop-color="#e8fbff" /><stop offset=".15" stop-color="#8fc9e8" /><stop offset=".5" stop-color="#3a3580" /><stop offset="1" stop-color="#120e2c" /></radialGradient><linearGradient id="sp1" x2="0" y2="1"><stop stop-color="#c2267c" /><stop offset="1" stop-color="#7a3aa0" stop-opacity=".1" /></linearGradient><circle cx="48" cy="48" r="45" fill="#e6e3e6" /><circle cx="48" cy="48" r="41" fill="url(#sr)" /><path d="M18 34C26 2 82 6 83 42 70 36 62 44 48 46 34 36 28 32 18 34z" fill="url(#sp1)" /><path d="M16 70c8-16 20-22 32-22 14 2 22 8 30 20-12 24-50 26-62 2z" fill="#1478d8" opacity=".4" /><path d="M48 48C40 38 34 30 26 26c14 0 20 10 22 22z" fill="#b48ae0" opacity=".6" /><path d="M48 48c4-10 3-20 1-28-3 8-3 18-1 28zM48 48c10 0 22-2 30-8-12 0-22 2-30 8z" fill="#e8d8f4" opacity=".8" /><path d="M48 48c0 14 4 26 11 34 0-14-4-24-11-34z" fill="#f070b8" opacity=".9" /><path d="M48 48c-14 4-28 10-33 20 12-4 24-10 33-20z" fill="#4fe8d0" opacity=".9" /><circle cx="48" cy="48" r="5" fill="#fff" /></svg></div>
        <div class="dock-item"><svg viewBox="0 0 96 96"><linearGradient id="lp" x2="0" y2="1"><stop stop-color="#b9c4ca" /><stop offset="1" stop-color="#838e92" /></linearGradient><circle cx="48" cy="48" r="45" fill="#b3bfc4" /><circle cx="48" cy="48" r="42" fill="url(#lp)" /><path d="M75 20c-18 2-30 10-38 27-8 0-13 1-19 5l13 5-2 7 9 7 6-1 3 11c6-8 9-12 10-20 14-10 20-24 18-41z" fill="#3d4145" /><circle cx="58" cy="38" r="6" fill="#aeb8bd" /><path d="M31 63c-5 2-8 7-9 13 7-1 11-4 14-9z" fill="#3d4145" /></svg></div>
        <div class="dock-item running"><svg viewBox="0 0 96 96"><radialGradient id="sf"><stop stop-color="#2cc9fa" /><stop offset="1" stop-color="#1b70e8" /></radialGradient><circle cx="48" cy="48" r="45" fill="#ececf0" /><circle cx="48" cy="48" r="41" fill="url(#sf)" /><circle cx="48" cy="48" r="37" fill="none" stroke="#e8f4ff" stroke-width="5" stroke-dasharray="1 3" /><path d="M76 20L43 43l10 10z" fill="#f0403a" /><path d="M20 76l33-23-10-10z" fill="#eee" /><path d="M76 20L48 48l5 5z" fill="#c9221e" /></svg></div>
        <div class="dock-item running"><svg viewBox="0 0 96 96"><g transform="rotate(-5 48 48)"><path d="M12 10h66v78H12z" fill="#fff" stroke="#fff" stroke-width="4" stroke-dasharray="3 2" /><path d="M16 14h58v70H16z" fill="#4a94e0" /><path d="M16 60h58v24H16z" fill="#8fc1ee" /><path d="M30 20c-2 14 2 24 8 32l-8 12 12-2 12 4 18 10-4-14-14-8-6-8c-8-6-12-16-18-26z" fill="#6b4a2c" /><path d="M32 24c2 10 5 18 10 24l2-5c-6-5-9-12-12-19z" fill="#d9c39b" /></g><circle cx="74" cy="74" r="17" fill="none" stroke="#5f6f8a" stroke-width="3" opacity=".6" /><circle cx="74" cy="74" r="10" fill="#4a7fc0" opacity=".7" /></svg><span class="badge">13,173</span></div>
        <div class="dock-item"><svg viewBox="0 0 96 96"><path d="M70 12l6 2 5 70-6 2z" fill="#e6eef0" /><path d="M76 32h5v14h-4z" fill="#5cc8ee" /><path d="M77 50h5v15h-4z" fill="#3ed06c" /><path d="M78 68h6v14h-5z" fill="#f0a51c" /><path d="M8 9l60-8q4 0 5 4l6 76-62 14q-4 0-5-4L7 14q0-4 1-5z" fill="#a9783a" /><path d="M8 10l7-1 7 85-5 1q-4 0-5-4z" fill="#8c5f28" /><circle cx="45" cy="43" r="22" fill="#956629" /><path d="M28 57c0-7 6-7 7-12-7-12-1-22 5-20 3 1 4 4 5 6 1-5 4-9 9-8 7 2 7 13 2 20 0 5 6 6 7 10-9 14-27 14-35 4z" fill="#80561f" /></svg></div>
        <div class="dock-item"><svg viewBox="0 0 96 96"><path d="M6 20l74-16 11 80-75 11z" fill="#5b6872" /><path d="M8 17l68-14 10 78-68 9z" fill="#f7f7f7" /><path d="M8 17l68-14 3 22-68 14z" fill="#e04542" /><text x="28" y="29" class="dock-sans" font-size="17" fill="#fff" transform="rotate(-9 44 24)">JUN</text><text x="35" y="76" class="dock-sans" font-size="46" fill="#222" transform="rotate(-7 48 60)">4</text></svg></div>
        <div class="dock-item"><svg viewBox="0 0 96 96"><path d="M8 11L76 1l12 83-69 10z" fill="#f8f8f6" /><path d="M8 11L76 1l2 14L10 25z" fill="#fbc91e" /><path d="M11 36l69-10M12 45l69-10M13 54l69-10M14 63l69-10M16 72l68-10M17 81l68-10M18 89l68-10" stroke="#d0d0d0" stroke-width="1.500" /></svg></div>
        <div class="dock-item"><svg viewBox="0 0 96 96"><path d="M15 11l56-9q5 0 6 4l12 75q0 4-4 5L26 95q-5 0-6-4L10 17q0-4 5-6z" fill="#222" opacity=".5" /><path d="M14 9l56-8q5 0 6 4l11 74q0 4-4 5L25 92q-5 0-6-4L9 15q0-4 5-6z" fill="#fafafa" /><circle cx="22" cy="26" r="6" fill="#ff9500" /><circle cx="24" cy="42" r="6" fill="#1badf8" /><circle cx="27" cy="58" r="6" fill="#63da38" /><circle cx="30" cy="74" r="6" fill="#cc73e1" /><path d="M32 15l36-6M34 31l38-6M37 47l37-6M40 63l37-6M42 80l38-6" stroke="#d0d0d0" stroke-width="1.500" /></svg></div>
        <div class="dock-item running"><svg viewBox="0 0 96 96"><circle cx="48" cy="48" r="47" fill="#1ea362" /><path d="M8 24A47 47 0 0 1 91 28H48z" fill="#dd4b3e" /><path d="M8 24l20 36 20-34z" fill="#dd4b3e" /><path d="M91 28a47 47 0 0 1-44 67l20-35-10-32z" fill="#ffce41" /><circle cx="48" cy="48" r="22" fill="#f4f4f4" /><circle cx="48" cy="48" r="17" fill="#4788f4" /></svg></div>
        <div class="dock-item"><svg viewBox="0 0 96 96"><path d="M2 17l74-11 11 74-73 11z" fill="#f6f4ee" /><path d="M6 20l67-10 9 67-65 10z" fill="#e4dfd0" /><path d="M32 16l41-6 5 36c-22 0-40-10-46-30z" fill="#8fd66b" /><path d="M38 15c6 16 18 25 36 26v9C52 48 36 36 30 16z" fill="#faf8f2" /><path d="M6 36l44 36-4 12-6 1L8 54z" fill="#fbca33" /><path d="M12 58l20 28-15 1z" fill="#f5b8c4" /><path d="M20 18l10-2 5 45-9 4z" fill="#1978d8" /><circle cx="30" cy="56" r="12" fill="#0f7be6" /><path d="M30 47l7 16-7-4-7 4z" fill="#fff" /><circle cx="74" cy="66" r="22" fill="#f2f2f2" /><circle cx="74" cy="66" r="14" fill="#fff" stroke="#6c90a8" stroke-width="2" /><path d="M74 46l4 6h-8z" fill="#d22" /><text x="64" y="72" class="dock-sans" font-size="16" fill="#222">3D</text></svg></div>
        <div class="dock-item"><svg viewBox="0 0 96 96"><circle cx="48" cy="48" r="45" fill="#f0eff0" /><g opacity=".88"><rect x="36" y="9" width="24" height="38" rx="12" fill="#f79a1c" /><rect x="36" y="9" width="24" height="38" rx="12" fill="#f3d60c" transform="rotate(45 48 48)" /><rect x="36" y="9" width="24" height="38" rx="12" fill="#a9d64a" transform="rotate(90 48 48)" /><rect x="36" y="9" width="24" height="38" rx="12" fill="#5fbf80" transform="rotate(135 48 48)" /><rect x="36" y="9" width="24" height="38" rx="12" fill="#6aaee6" transform="rotate(180 48 48)" /><rect x="36" y="9" width="24" height="38" rx="12" fill="#8a80c4" transform="rotate(225 48 48)" /><rect x="36" y="9" width="24" height="38" rx="12" fill="#d277a8" opacity=".85" transform="rotate(270 48 48)" /><rect x="36" y="9" width="24" height="38" rx="12" fill="#f0605a" opacity=".85" transform="rotate(315 48 48)" /></g><path d="M48 48L40 28M48 48l8-20M48 48l20-8M48 48l20 8M48 48l8 20M48 48l-8 20M48 48l-20 8M48 48l-20-8" stroke="#6b2f3c" stroke-width="2" opacity=".5" /></svg></div>
        <div class="dock-item"><svg viewBox="0 0 96 96"><linearGradient id="ms" x2="0" y2="1"><stop stop-color="#5bbcff" /><stop offset="1" stop-color="#0f7df5" /></linearGradient><path d="M48 7c26 0 45 17 45 38S74 81 48 81c-5 0-9 0-13-2-5 5-10 7-18 8 5-5 7-10 7-15C11 66 3 57 3 45 3 24 22 7 48 7z" fill="url(#ms)" /><path d="M64 43c15 0 26 10 26 22 0 7-3 12-8 16l2 9-10-4c-3 1-6 1-10 1-15 0-26-10-26-22s11-22 26-22z" fill="#f2f6fb" /><circle cx="52" cy="66" r="4" fill="#1460b4" /><circle cx="65" cy="66" r="4" fill="#1460b4" /><circle cx="78" cy="66" r="4" fill="#1460b4" /></svg></div>
        <div class="dock-item"><svg viewBox="0 0 96 96"><linearGradient id="ft" x2="0" y2="1"><stop stop-color="#3df26c" /><stop offset="1" stop-color="#09c32b" /></linearGradient><rect x="2" y="9" width="81" height="72" rx="10" fill="url(#ft)" /><rect x="15" y="27" width="39" height="36" rx="7" fill="#f5f5f5" /><path d="M56 40l14-11v26l-14-7z" fill="#f5f5f5" /><circle cx="71" cy="64" r="23" fill="#f4f4f4" /><path d="M61 50c-6 8 8 27 22 26 3-4 2-8-4-9l-4 2c-4-2-7-6-8-10l3-3c-1-5-5-8-9-6z" fill="#19c33a" /></svg></div>
        <div class="dock-item"><svg viewBox="0 0 96 96"><circle cx="48" cy="48" r="45" fill="#fb3c5c" /><circle cx="48" cy="48" r="38" fill="#f4f3f6" /><path d="M23 28q0-5 5-5h13l32 51H56L23 38zM56 23h12q5 0 5 5v29L56 30zM23 44l17 26v4H28q-5 0-5-5z" fill="#fb3350" /></svg></div>
        <div class="dock-item"><svg viewBox="0 0 96 96"><linearGradient id="it" x1=".2" x2=".8" y2="1"><stop stop-color="#fb5b66" /><stop offset=".5" stop-color="#b55ce6" /><stop offset="1" stop-color="#30b8f4" /></linearGradient><circle cx="48" cy="48" r="45" fill="url(#it)" /><circle cx="48" cy="48" r="39" fill="#f6f4f8" /><path d="M38 26l31-7v44c0 11-16 11-16 2 0-6 5-8 11-9V34l-21 5v28c0 11-16 13-16 3 0-6 5-8 11-9z" fill="url(#it)" /></svg></div>
        <div class="dock-item"><svg viewBox="0 0 96 96"><linearGradient id="as" x2="0" y2="1"><stop stop-color="#1ac6fb" /><stop offset="1" stop-color="#1c62f0" /></linearGradient><circle cx="48" cy="48" r="45" fill="#e8ecf2" /><circle cx="48" cy="48" r="42" fill="url(#as)" /><path d="M44 20l28 48M52 20L30 56M28 64l-4 6M22 56h30M62 56h14" stroke="#fff" stroke-width="7" stroke-linecap="round" /></svg></div>
        <div class="dock-item"><svg viewBox="0 0 96 96"><linearGradient id="sp" x2="0" y2="1"><stop stop-color="#c2ccd2" /><stop offset="1" stop-color="#808a8e" /></linearGradient><rect x="3" y="6" width="90" height="84" rx="4" fill="url(#sp)" /><circle cx="48" cy="48" r="37" fill="#2d2d2f" /><circle cx="48" cy="48" r="31" fill="none" stroke="#b4b4b4" stroke-width="5" stroke-dasharray="4 3" /><circle cx="48" cy="48" r="26" fill="#454547" stroke="#b9b9b9" stroke-width="6" /><path d="M48 48h26M48 48L35 26M48 48L35 70" stroke="#b9b9b9" stroke-width="6" /><circle cx="48" cy="48" r="7" fill="#b9b9b9" /></svg></div>
        <div class="dock-item running"><svg viewBox="0 0 96 96"><path d="M1 0h94v94H1z" fill="#31000f" stroke="#fd4f9c" stroke-width="5" /><text x="23" y="66" class="dock-id" font-size="58" fill="#fd4f9c">Id</text></svg></div>
        <span class="dock-sep"></span>
        <div class="dock-item"><svg viewBox="0 0 96 96"><rect x="7" y="7" width="82" height="82" rx="4" fill="#0f78e0" /><circle cx="48" cy="48" r="34" fill="#fff" /><path d="M17 48l22-13v8h18v-8l22 13-22 13v-8H39v8z" fill="#1480e6" /></svg></div>
        <div class="dock-item"><svg viewBox="0 0 96 96"><path d="M6 10L72 0l14 83-68 11z" fill="#fbfbfb" /><path d="M8 20l66-10M10 29l66-10M11 38l66-10M13 47l66-10M14 56l66-10M16 65l66-10M17 74l66-10M19 83l66-10" stroke="#b9c0c8" stroke-width="1.500" /><path d="M16 9l12 84" stroke="#f0a0a0" /><path d="M78 2l7 1-22 84-5 8-1-9z" fill="#8ba3b8" stroke="#5c7388" /></svg></div>
        <div class="dock-item"><svg viewBox="0 0 96 96"><path d="M12 8h78v64H12z" fill="#f5f5f5" /><path d="M16 12h70v34H16z" fill="#9c7d4c" /><path d="M0 25l77-12 9 62L10 87z" fill="#fff" /><path d="M4 28l70-11 4 26-70 8z" fill="#7fb0e8" /><path d="M8 48l70-6 3 20-70 10z" fill="#1f4f92" /><path d="M10 64c20-2 34 8 48 2l4 10-48 6z" fill="#e6ecf0" /><path d="M13 77c8-6 18-2 26 2l-25 4z" fill="#6c4a32" /><path d="M59 60c0 22 4 31 18 31s18-9 18-31z" fill="#8d8573" /><ellipse cx="77" cy="55" rx="19" ry="18" fill="#555" /><ellipse cx="77" cy="55" rx="15" ry="14" fill="#a3b0b4" stroke="#ddd" stroke-width="2" /><path d="M64 58c8-4 18-4 26 0-4 10-20 12-26 0z" fill="#6b5c40" /></svg></div>
        <span class="dock-sep tall"></span>
        <div class="dock-item"><svg viewBox="0 0 96 96"><path d="M12 14l9-13 8 5 6-6 7 9 8-8 10 8 9-3 13 12-10 10H20z" fill="#dcdcdc" /><path d="M26 8l6 10-8 4zM58 6l8 12h-12zM40 12l8 8H34z" fill="#5d6470" /><path d="M46 10l6 10h-10z" fill="#3a9fd0" /><path d="M60 12l8 8H58z" fill="#a04632" /><path d="M11 12c2 10 70 10 74 0l-9 74c-2 12-54 12-56 0z" fill="#e2e2e2" opacity=".92" /><path d="M24 26l8 62M70 26l-6 62M48 24v66" stroke="#cfcfcf" stroke-width="4" opacity=".5" /></svg></div>
    </footer>

    <script>
        // half an inch on screen at the current zoom
        const HALF = 244;
        const labelsX = ["0", "1/2", "1", "1/2", "2", "1/2", "3", "1"];
        const labelsY = ["0", "1/2", "1", "1/2", "2"];

        function tickSize(i) {
            if (i % 8 === 0) return 32;
            if (i % 4 === 0) return 12;
            if (i % 2 === 0) return 8;
            return 4;
        }

        function text(x, y, value) {
            return `<text x="${x}" y="${y}">${value}</text>`;
        }

        function drawX(el, origin, last) {
            let d = "";
            for (let i = 0; i <= last; i++) {
                const x = Math.round(origin + i * HALF / 8);
                d += `M${x} 30v-${tickSize(i)}`;
            }
            let out = `<path d="${d}"/>`;
            labelsX.forEach((label, i) => out += text(origin + i * HALF + 4, 20, label));
            el.innerHTML = out;
        }

        function drawY(el, origin, first, last) {
            let d = "";
            for (let i = first; i <= last; i++) {
                const y = Math.round(origin + i * HALF / 8);
                d += `M30 ${y}h-${tickSize(i)}`;
            }
            let out = "";
            labelsY.forEach((label, i) => {
                const y = origin + i * HALF;
                const parts = label.split("/");
                out += text(4, y + 21, parts[0]);
                if (parts[1]) {
                    out += text(4, y + 49, parts[1]);
                    d += `M4 ${y + 24}h14`;
                }
            });
            el.innerHTML = `<path d="${d}"/>` + out;
        }

        drawX(document.getElementById("rulerX"), 12, 56);
        drawY(document.getElementById("rulerY"), 160, -5, 37);
    </script>
</body>

</html>
```

FILE: styles.css
```css
* {
    box-sizing: border-box;
}

body {
    margin: 0;
    height: 100vh;
    display: flex;
    flex-direction: column;
    overflow: hidden;
    background: #1d1011;
    font-family: "Noto Sans", "Open Sans", sans-serif;
    font-size: 20px;
    color: #f2f2f2;
}

button,
input,
select {
    font: inherit;
    color: inherit;
    background: none;
    border: 0;
    padding: 0;
    margin: 0;
    border-radius: 0;
}

button {
    display: flex;
    align-items: center;
    justify-content: center;
}

a {
    color: inherit;
    text-decoration: none;
}

svg {
    display: block;
    flex: none;
}

.sprite {
    position: absolute;
    width: 0;
    height: 0;
}

.chev {
    width: 16px;
    height: 10px;
}

/* mac menu bar */
.menubar {
    height: 44px;
    flex: none;
    display: flex;
    align-items: center;
    padding: 0 44px 0 42px;
    background: linear-gradient(90deg, #ecdedd, #e8dde2 25%, #e0dee8 34%, #e8dde1 48%, #cfd6e8 62%, #c3cee8);
    font-family: Inter, Roboto, sans-serif;
    font-size: 27px;
    color: #2c2328;
}

.apple {
    width: 26px;
    height: 31px;
    margin-bottom: 4px;
}

.menus {
    display: flex;
    gap: 37px;
    margin-left: 40px;
}

.app-name {
    font-weight: 700;
}

.tray {
    margin-left: auto;
    display: flex;
    align-items: center;
    gap: 24px;
    color: #1d2336;
}

.clock {
    margin: 0 18px 0 11px;
}

.tray-siri {
    margin: 0 0 0 24px;
}

/* application window */
.window {
    flex: 1;
    min-height: 0;
    display: flex;
    flex-direction: column;
    border: solid #383838;
    border-width: 3px 2px 0;
    border-radius: 10px 10px 0 0;
    background: #535353;
}

.appbar {
    height: 69px;
    flex: none;
    display: flex;
    align-items: center;
    position: relative;
    padding: 0 28px 0 16px;
    border-bottom: 2px solid #383838;
    color: #c8c8c8;
}

.lights {
    display: flex;
    gap: 16px;
    margin-right: 42px;
}

.light {
    width: 24px;
    height: 24px;
    border-radius: 50%;
}

.red {
    background: #ff5f57;
}

.yellow {
    background: #febc2e;
}

.green {
    background: #28c840;
}

.adobe-box {
    width: 32px;
    height: 32px;
    margin-right: 40px;
    background: #c4c4c4;
    color: #535353;
    font-weight: 700;
    font-size: 20px;
}

.zoom-level {
    gap: 34px;
    padding-right: 24px;
    margin-right: 20px;
    margin-left: -6px;
    height: 40px;
    border-right: 1px solid #4a4a4a;
    font-size: 25px;
    color: #f2f2f2;
}

.view-buttons {
    display: flex;
    gap: 30px;
}

.view-buttons button {
    gap: 14px;
}

.view-buttons .chev {
    color: #f2f2f2;
}

.app-title {
    position: absolute;
    left: 0;
    right: 28px;
    margin: 0;
    text-align: center;
    font-size: 25px;
    font-weight: 400;
    color: #dedede;
    pointer-events: none;
}

.app-right {
    margin-left: auto;
    display: flex;
    align-items: center;
}

.pill {
    border: 2px solid #fff;
    border-radius: 26px;
    height: 52px;
    color: #fff;
    font-size: 24px;
}

.publish {
    width: 244px;
    gap: 10px;
}

.bulb {
    width: 86px;
    height: 40px;
    border-right: 2px solid #4a4a4a;
}

.workspace {
    gap: 22px;
    padding: 0 30px 0 24px;
    height: 40px;
    font-size: 25px;
    font-weight: 600;
    color: #e6e6e6;
    border-right: 2px solid #4a4a4a;
}

.stock {
    display: flex;
    align-items: center;
    gap: 8px;
    width: 260px;
    height: 39px;
    margin-left: 12px;
    padding: 0 6px;
    border: 2px solid #6a6a6a;
    border-radius: 5px;
    background: #454545;
}

.stock input {
    width: 190px;
}

.stock input::placeholder {
    color: #858585;
    opacity: 1;
}

/* fields */
.field {
    display: flex;
    height: 42px;
    min-width: 0;
    border: 2px solid #6b6b6b;
    border-radius: 5px;
    background: #454545;
    overflow: hidden;
}

.field input,
.field select {
    flex: 1;
    width: 100%;
    min-width: 0;
    padding: 0 8px;
    appearance: none;
    outline: none;
}

.field-icon {
    align-self: center;
    margin-left: 2px;
    color: #c8c8c8;
}

.spin {
    display: flex;
    flex-direction: column;
    flex: none;
    width: 34px;
    border-right: 2px solid #5e5e5e;
}

.spin button {
    flex: 1;
}

.spin svg {
    width: 16px;
    height: 10px;
}

.spin.dim {
    background: #5a5a5a;
    color: #a8a8a8;
}

.drop {
    display: flex;
    align-items: center;
    justify-content: center;
    flex: none;
    width: 36px;
    border-left: 2px solid #5e5e5e;
    pointer-events: none;
}

.pick.plain .drop {
    border-left: 0;
}

.light-field select {
    background: #e2e2e2;
    color: #111;
    padding-left: 14px;
}

/* control panel */
.control {
    height: 120px;
    flex: none;
    display: flex;
    align-items: center;
    gap: 10px;
    padding-left: 8px;
    border-bottom: 2px solid #383838;
    color: #c8c8c8;
}

.control .field {
    color: #f2f2f2;
}

.grip-v {
    width: 4px;
    height: 38px;
    margin-right: 18px;
    background: repeating-linear-gradient(#363636 0 2px, transparent 2px 4px);
}

.group {
    display: grid;
    grid-auto-flow: column;
    grid-template-rows: 42px 42px;
    row-gap: 10px;
    align-items: center;
    flex: none;
}

.group + .group {
    border-left: 1px solid #4b4b4b;
}

.g-font {
    grid-template-columns: 320px 52px 174px;
    padding-left: 13px;
}

.g-case {
    grid-template-columns: 54px 54px 54px;
    padding-left: 7px;
}

.g-kern {
    grid-template-columns: 50px 174px;
}

.g-scale {
    grid-template-columns: 52px 174px 52px 174px;
}

.g-indent {
    grid-template-columns: 50px 174px 52px 174px;
}

.g-style {
    grid-template-columns: 82px 320px;
}

.g-align {
    grid-template-columns: 54px 54px 54px 54px;
    padding-left: 30px;
    justify-items: center;
}

.ico {
    width: 44px;
    height: 36px;
    justify-self: center;
    fill: currentColor;
    overflow: visible;
}

.line {
    fill: none;
    stroke: currentColor;
    stroke-width: 2;
}

.slab {
    font-family: "DejaVu Serif", serif;
}

.serif {
    font-family: "Liberation Serif", serif;
}

.b {
    font-weight: 700;
}

.i {
    font-style: italic;
}

.dark {
    fill: #454545;
}

.icon-btn {
    width: 44px;
    height: 44px;
    border-radius: 5px;
    font-size: 24px;
    color: #c8c8c8;
}

.char {
    font-size: 28px;
}

.icon-btn svg {
    width: 30px;
    height: 30px;
    stroke: currentColor;
    stroke-width: 2;
}

.on {
    background: #2d2d2d;
}

.ty {
    font-family: "DejaVu Serif", serif;
    font-size: 27px;
    height: 40px;
}

.ty small {
    font-size: 20px;
    padding-top: 5px;
}

.ty sup,
.ty sub {
    font-size: 14px;
    line-height: 18px;
}

.ty sup {
    align-self: flex-start;
}

.ty sub {
    align-self: flex-end;
}

.char-style {
    justify-self: center;
    font-size: 32px;
    font-weight: 600;
}

.control-end {
    margin-left: auto;
    display: flex;
    align-items: center;
    gap: 16px;
}

.g-end {
    width: 56px;
    border-left: 1px solid #4b4b4b;
    justify-items: center;
    justify-content: center;
}

/* tools */
.workarea {
    flex: 1;
    min-height: 0;
    display: flex;
}

.dock-strip {
    height: 24px;
    flex: none;
    display: flex;
    align-items: center;
    justify-content: flex-end;
    padding-right: 12px;
    background: #434343;
    border-bottom: 2px solid #383838;
    color: #c8c8c8;
}

.dock-strip.left {
    align-self: stretch;
    justify-content: flex-start;
    padding-left: 8px;
}

.tools {
    width: 79px;
    flex: none;
    display: flex;
    flex-direction: column;
    align-items: center;
    border-right: 3px solid #3c3c3c;
    color: #c8c8c8;
}

.grip-h {
    width: 38px;
    height: 8px;
    margin: 6px 0 14px;
    background: repeating-linear-gradient(90deg, #363636 0 2px, transparent 2px 4px);
}

.tool-set {
    padding-bottom: 2px;
    border-bottom: 1px solid #4b4b4b;
}

.tools button {
    position: relative;
}

.tool-set button {
    width: 56px;
    height: 44px;
    margin: 2px 0 4px;
    border-radius: 5px;
}

.tool-set button > svg:first-child {
    width: 48px;
    height: 40px;
}

.tools .more {
    position: absolute;
    right: 2px;
    bottom: 2px;
    width: 8px;
    height: 8px;
}

.swatch-tools {
    display: flex;
    gap: 14px;
    margin: 10px 0 9px;
}

.format-row {
    display: flex;
    gap: 10px;
    margin: 14px 0 12px;
}

.format-row button {
    width: 28px;
    height: 24px;
    border-radius: 5px;
}

.slab-t {
    font-family: "DejaVu Serif", serif;
    font-weight: 700;
    font-size: 22px;
    color: #c8c8c8;
}

.big-tool {
    width: 56px;
    height: 44px;
    margin-bottom: 14px;
    border-radius: 5px;
    background: #2d2d2d;
}

/* document */
.document {
    flex: 1;
    min-width: 0;
    display: flex;
    flex-direction: column;
    margin-left: 3px;
}

.doc-tabs {
    height: 58px;
    flex: none;
    display: flex;
    background: #424242;
    border-bottom: 2px solid #383838;
}

.doc-tab {
    display: flex;
    align-items: center;
    gap: 20px;
    padding: 0 22px 0 28px;
    background: #535353;
    border-right: 2px solid #383838;
    font-size: 22px;
    font-weight: 600;
}

.doc-body {
    flex: 1;
    min-height: 0;
    display: grid;
    grid-template-columns: 32px 1fr 29px;
    grid-template-rows: 32px 1fr;
}

.ruler-corner {
    background: #1f1f1f;
    border: solid #8a8a8a;
    border-width: 0 2px 2px 0;
}

.ruler-x,
.ruler-y {
    width: 100%;
    height: 100%;
    background: #1f1f1f;
    overflow: hidden;
    font-weight: 600;
    font-size: 21px;
    fill: #fff;
    stroke: none;
}

.ruler-x path,
.ruler-y path {
    stroke: #999;
}

.ruler-x {
    border-bottom: 2px solid #8a8a8a;
}

.ruler-y {
    grid-area: 2 / 1;
    border-right: 2px solid #8a8a8a;
}

.canvas {
    grid-area: 2 / 2;
    position: relative;
    overflow: hidden;
    background: #5e5e5e;
}

/* the sheet sits at the ruler origin */
.sheet {
    position: absolute;
    left: 12px;
    top: 159px;
    width: 1710px;
    height: 978px;
    border: 1px solid #333;
    background: #fff;
    box-shadow: 3px 3px 0 #000;
}

.margins {
    position: absolute;
    inset: 243px;
    border: solid #8a2aa8;
    border-width: 1px;
    border-top-color: #c65ac6;
    border-bottom-color: #c65ac6;
}

.scroll-y {
    grid-area: 1 / 3 / 3 / 4;
    display: flex;
    flex-direction: column;
    background: #4a4a4a;
    color: #b0b0b0;
}

.scroll-y button {
    height: 28px;
}

.scroll-y .thumb {
    flex: 0 1 786px;
    margin: 244px 0 auto 1px;
    border-radius: 14px;
    background: #686868;
}

.status {
    height: 35px;
    flex: none;
    display: flex;
    align-items: center;
    background: #4c4c4c;
    color: #d0d0d0;
}

.pager {
    display: flex;
    align-items: center;
    gap: 27px;
    margin-left: 22px;
}

.dim {
    color: #858585;
}

.page-field {
    width: 178px;
    height: 32px;
    color: #fff;
}

.profile {
    margin-left: 32px;
    gap: 48px;
}

.preflight {
    margin-left: 30px;
    gap: 10px;
    color: #dedede;
}

.preflight i {
    width: 20px;
    height: 20px;
    border-radius: 50%;
    background: #686868;
}

.scroll-x {
    flex: 1;
    align-self: stretch;
    display: flex;
    align-items: center;
    padding: 0 10px;
    margin-left: 14px;
    background: #434343;
}

.scroll-x .thumb {
    width: 192px;
    height: 30px;
    margin: 0 200px 0 auto;
    border-radius: 15px;
    background: #5b5b5b;
}

.split {
    margin: 0 14px 0 18px;
}

/* side panels */
.panel-col {
    display: flex;
    flex-direction: column;
    flex: none;
    border-left: 5px solid #3c3c3c;
}

.mid {
    width: 486px;
}

.end {
    width: 509px;
}

.panel {
    display: flex;
    flex-direction: column;
    min-height: 0;
}

.layers,
.pages {
    flex: 1;
}

.tabs {
    height: 54px;
    flex: none;
    display: flex;
    background: #424242;
}

.tab {
    padding: 0 20px 0 24px;
    font-size: 23px;
    font-weight: 600;
    color: #a4a4a4;
    border: solid #383838;
    border-width: 0 2px 2px 0;
}

.tab.on {
    gap: 8px;
    padding: 0 22px 0 14px;
    background: #535353;
    border-bottom-color: #535353;
    color: #f2f2f2;
}

.tab.on svg {
    color: #aaa;
}

.pages .tab {
    padding: 0 8px 0 22px;
}

.pages .tab.on {
    padding: 0 22px 0 12px;
}

.pages .tab.clip {
    padding: 0 0 0 22px;
}

.tab-menu {
    flex: 1;
    justify-content: flex-end;
    padding-right: 12px;
    border-bottom: 2px solid #383838;
    color: #c8c8c8;
}

.layer-list {
    flex: 1;
    margin-top: 5px;
    border-bottom: 2px solid #5e5e5e;
}

.layer {
    display: flex;
    height: 44px;
    border: solid #5e5e5e;
    border-width: 1px 0;
}

.eye {
    width: 42px;
    border-right: 1px solid #5e5e5e;
    color: #c8c8c8;
}

.lock {
    width: 44px;
    border-right: 1px solid #5e5e5e;
}

.tag {
    width: 6px;
    margin: 2px 4px;
    background: #5294f2;
}

.layer-name {
    flex: 1;
    display: flex;
    align-items: center;
    gap: 10px;
    padding: 0 20px 0 16px;
    background: #506b85;
    font-weight: 600;
    font-size: 20px;
}

.nib {
    margin-left: auto;
}

.layer-name i {
    width: 15px;
    height: 15px;
    margin-left: 14px;
    border: 2px solid #000;
}

.panel-foot {
    height: 52px;
    flex: none;
    display: flex;
    align-items: center;
    gap: 34px;
    padding: 0 49px 0 10px;
    color: #c8c8c8;
}

.panel-foot span {
    margin-right: auto;
    color: #f2f2f2;
}

.layers .panel-foot {
    height: 48px;
}

.faint {
    color: #858585;
}

.push {
    margin-left: auto;
    margin-right: -8px;
}

.swatches {
    border-top: 5px solid #3c3c3c;
}

.swatch-bar {
    height: 80px;
    display: flex;
    align-items: center;
    padding: 0 0 0 12px;
}

.swatch-bar .swap {
    margin: 0 4px 40px -12px;
    color: #c8c8c8;
}

.swatch-bar button {
    width: 36px;
    height: 36px;
    margin-left: 6px;
    border-radius: 5px;
    color: #c8c8c8;
}

.swatch-bar .on {
    margin-left: 16px;
}

.swatch-bar label {
    margin-left: 72px;
}

.tint {
    display: flex;
    align-items: center;
    width: 106px;
    height: 42px;
    margin: 0 6px 0 10px;
    padding-right: 14px;
    border-radius: 5px;
    background: #5e5e5e;
}

.tint input {
    flex: 1;
    min-width: 0;
}

.swatch-list {
    display: flex;
    border: solid #626262;
    border-width: 2px 0;
}

.swatch-list ul {
    flex: 1;
    margin: 0;
    padding: 0;
    list-style: none;
}

.swatch-list li {
    display: flex;
    align-items: center;
    gap: 16px;
    height: 43px;
    padding: 0 30px 4px 36px;
    color: #c8c8c8;
}

.swatch-list li.on {
    background: #476a88;
}

.swatch-list b,
.swatch-list span {
    flex: 1;
    font-weight: 400;
    color: #f2f2f2;
}

.swatch-list b {
    font-weight: 600;
}

.swatch-list li svg:last-child {
    margin-left: 24px;
}

.mini-scroll {
    width: 28px;
    display: flex;
    flex-direction: column;
    align-items: center;
    justify-content: space-between;
    padding: 8px 0 14px;
    background: #4a4a4a;
    color: #b0b0b0;
}

/* pages panel */
.masters {
    height: 152px;
    padding: 9px 43px 0 6px;
    border-bottom: 4px solid #5e5e5e;
}

.master {
    display: flex;
    height: 48px;
    margin-bottom: 10px;
    font-weight: 600;
}

.master span {
    margin: 4px auto 0 0;
}

.master i {
    width: 84px;
    background: #fff;
    box-shadow: 0 0 0 1px #777;
}

.page-list {
    flex: 1;
    display: flex;
    align-items: flex-start;
    justify-content: center;
    padding: 8px 0 0 96px;
}

.spread {
    display: flex;
    flex-direction: column;
    align-items: center;
    height: 94px;
    border-left: 2px solid #c8c8c8;
}

.page-thumb {
    flex: none;
    width: 125px;
    height: 71px;
    margin-top: 3px;
    background: #88c4fa;
}

.page-thumb b {
    display: block;
    width: 17px;
    margin-left: auto;
    background: #fff;
    color: #000;
    line-height: 21px;
    text-align: center;
}

.page-num {
    margin-top: 11px;
    padding: 0 5px;
    background: #0b84f0;
    color: #fff;
    font-weight: 600;
    line-height: 28px;
}

/* document setup */
.dialog {
    position: absolute;
    left: 842px;
    top: 412px;
    width: 838px;
    border-radius: 10px;
    background: #535353;
    box-shadow: 0 0 0 1px #666, 0 24px 60px 10px rgba(0, 0, 0, .5);
    font-size: 24px;
    line-height: 30px;
    color: #fff;
}

.dialog h2 {
    margin: 0;
    height: 45px;
    border-radius: 10px 10px 0 0;
    border-bottom: 1px solid #8f8f8f;
    background: linear-gradient(#c8c8c8, #adadad);
    font-family: Inter, Roboto, sans-serif;
    font-size: 25px;
    font-weight: 400;
    line-height: 46px;
    text-align: center;
    color: #333;
}

.dialog-body {
    padding: 30px 30px 30px 31px;
}

.dialog .field {
    width: 100%;
}

.top-grid {
    display: grid;
    grid-template-columns: 207px 190px 1fr;
    gap: 10px;
    align-items: center;
}

.top-grid > label:not(.check),
.pair label {
    text-align: right;
}

.dialog .short {
    width: 126px;
}

.dialog .focus {
    border-color: #4a96e8;
    background: #fff;
    color: #444;
}

.focus input {
    background: linear-gradient(#b3d7ff, #b3d7ff) 8px 50% / 16px 30px no-repeat;
}

.check {
    display: flex;
    align-items: center;
    gap: 12px;
}

.check input {
    appearance: none;
    width: 24px;
    height: 24px;
    border: 2px solid #6b6b6b;
    border-radius: 4px;
}

.check input:checked {
    border: 0;
    background: #c8c8c8;
}

.check input:checked::before {
    content: "";
    display: block;
    width: 7px;
    height: 13px;
    margin: 3px 0 0 8px;
    border: solid #444;
    border-width: 0 3px 3px 0;
    transform: rotate(40deg);
}

.off {
    color: #8c8c8c;
}

fieldset {
    display: flex;
    min-width: 0;
    margin: 38px 0 0;
    padding: 0;
    border: 2px solid #484848;
    border-radius: 5px;
}

legend {
    display: flex;
    align-items: center;
    gap: 10px;
    margin-left: 18px;
    padding: 0 8px;
}

.size-set legend .field {
    width: 398px;
}

.size-set {
    margin-top: 40px;
    padding: 30px 0 17px;
}

.margin-set {
    padding: 5px 0 17px;
}

.pair {
    display: grid;
    grid-template-columns: 112px 161px;
    gap: 10px;
    align-items: center;
}

.size-pair {
    column-gap: 8px;
}

.margin-pair {
    grid-template-columns: 141px 161px;
}

.margin-pair2 {
    grid-template-columns: 111px 161px;
}

.orient {
    display: flex;
    align-items: center;
    height: 42px;
    gap: 4px;
    margin-left: 107px;
}

.orient button {
    width: 40px;
    height: 40px;
    border-radius: 5px;
    color: #c8c8c8;
}

.orient span {
    margin-right: 8px;
}

.link {
    width: 36px;
    height: 36px;
    border-radius: 5px;
    color: #c8c8c8;
}

.margin-set .link {
    align-self: center;
    margin-left: 12px;
}

.bleed-set legend {
    gap: 18px;
}

.bleed-set legend .chev {
    margin-left: 8px;
    color: #c8c8c8;
}

.bleed-set {
    padding: 26px 0 7px;
}

.bleed-set table {
    table-layout: fixed;
    width: 761px;
    border-spacing: 10px 5px;
}

.bleed-set th {
    width: 144px;
    padding: 0 0 11px;
    font-weight: 400;
}

.bleed-set td {
    padding: 0 0 5px;
}

.bleed-set th:first-child {
    width: 79px;
    padding: 0 0 5px;
    text-align: right;
}

.bleed-set th:last-child {
    width: 36px;
}

.adjust {
    display: flex;
    align-items: flex-start;
    height: 128px;
    margin-top: 52px;
    padding: 26px 26px 0 29px;
    border: 2px solid #484848;
    border-radius: 5px;
}

.adjust svg {
    margin-top: 7px;
}

.adjust p {
    flex: 1;
    margin: 2px 20px 0 12px;
}

.adjust .pill {
    width: 226px;
}

.dialog-foot {
    display: flex;
    align-items: flex-start;
    gap: 20px;
    margin-top: 31px;
}

.dialog-foot .check {
    margin: 5px auto 0 0;
}

.dialog-foot .pill {
    width: 180px;
}

.dialog-foot .ok {
    border-width: 4px;
}

/* dock */
.dock {
    flex: none;
    align-self: center;
    display: flex;
    height: 138px;
    margin-top: 4px;
    padding: 0 8px;
    border-radius: 10px 10px 0 0;
    background: linear-gradient(#6f5d59, #655552);
}

.dock-item {
    position: relative;
    width: 112px;
    padding: 18px 8px 0;
}

.dock-item > svg {
    width: 96px;
    height: 96px;
}

.running::after {
    content: "";
    display: block;
    width: 8px;
    height: 8px;
    margin: 12px auto 0;
    border-radius: 50%;
    background: #000;
}

.badge {
    position: absolute;
    top: 14px;
    right: 0;
    padding: 0 5px;
    border-radius: 20px;
    background: #fb3e36;
    color: #fff;
    font-family: Roboto, sans-serif;
    font-size: 22px;
    line-height: 40px;
}

.dock-sep {
    width: 2px;
    height: 68px;
    margin: 36px 25px 0;
    background: #463937;
}

.dock-sep.tall {
    height: 100px;
    margin-top: 20px;
}

.dock-sans {
    font-family: Roboto, sans-serif;
}

.dock-id {
    font-family: "Open Sans", sans-serif;
    font-weight: 600;
}
```
